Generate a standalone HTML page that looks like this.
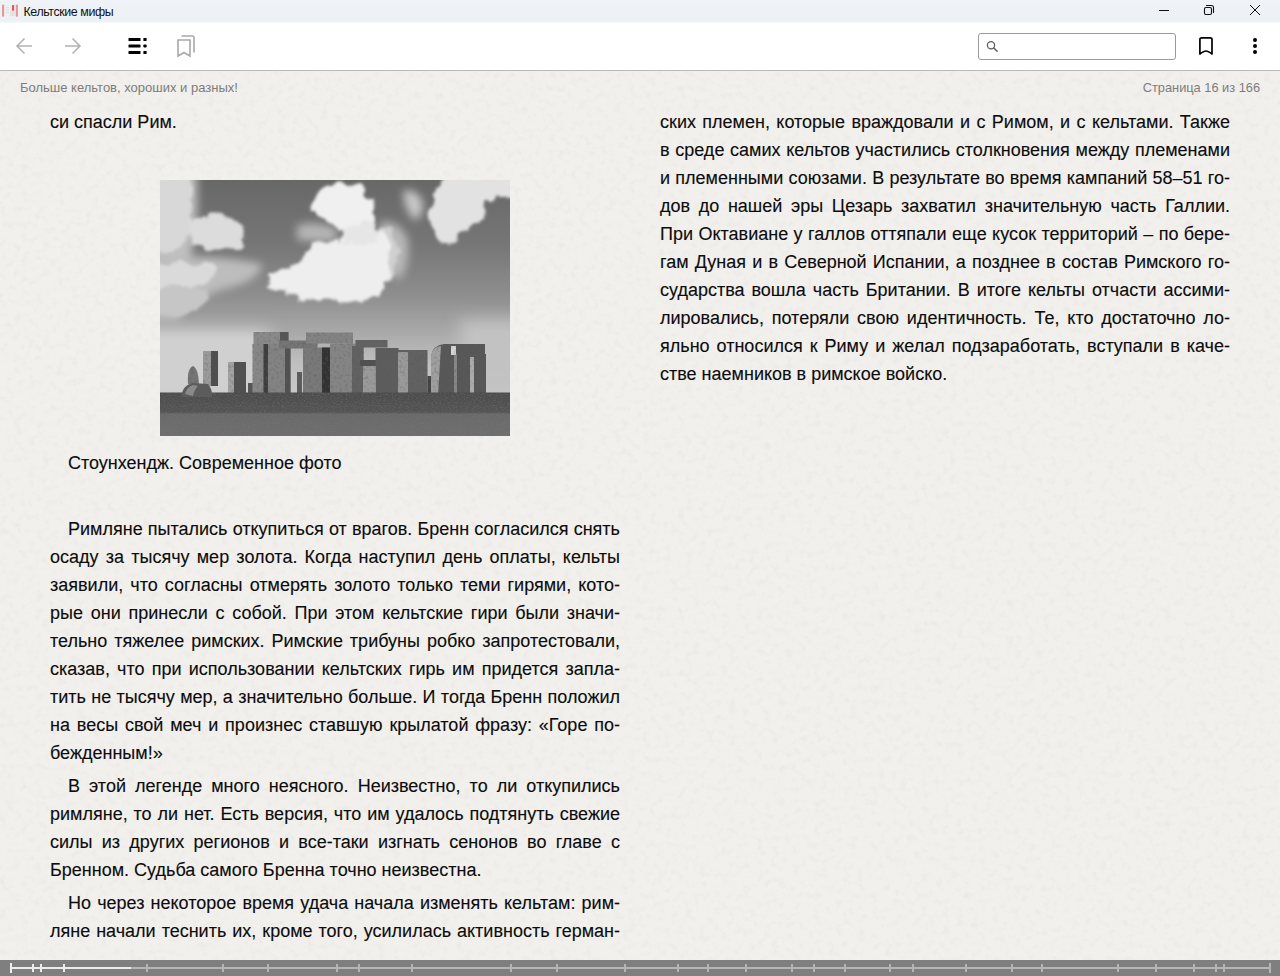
<!DOCTYPE html>
<html><head><meta charset="utf-8">
<style>
*{margin:0;padding:0;box-sizing:border-box}
html,body{width:1280px;height:976px;overflow:hidden;font-family:"Liberation Sans",sans-serif;background:#f2f0ed}
#title{position:absolute;left:0;top:0;width:1280px;height:23px;background:linear-gradient(#eff3f8,#ecf1f5 90%,#f6f9fa)}
#title .t{position:absolute;left:23.5px;top:3.5px;font-size:12.4px;letter-spacing:-0.4px;line-height:16px;color:#111}
#tool{position:absolute;left:0;top:23px;width:1280px;height:47px;background:#fff}
#tline{position:absolute;left:0;top:70px;width:1280px;height:1px;background:#b9b9b9}
#page{position:absolute;left:0;top:71px;width:1280px;height:889px;background:#f2f0ed;overflow:hidden}
.hdr{position:absolute;top:9px;font-size:13px;line-height:16px;color:#7c7c7c}
.col{position:absolute;width:570px;font-size:18px;line-height:28px;color:#0c0c0c;-webkit-text-stroke:0.12px #0c0c0c}
.l{display:block;height:28px;white-space:nowrap;text-align:justify;text-align-last:justify}
.e{text-align:left;text-align-last:left}
.i{text-indent:18px}
#bar{position:absolute;left:0;top:960px;width:1280px;height:16px;background:#7f7f7f}
</style></head><body>
<div id="title">
 <svg style="position:absolute;left:0;top:0" width="20" height="20" viewBox="0 0 20 20">
  <rect x="4" y="5" width="11.8" height="11.5" fill="#efefef"/>
  <rect x="6" y="7" width="3" height="0.8" fill="#dcdcdc"/><rect x="6" y="9.5" width="3" height="0.8" fill="#dcdcdc"/><rect x="6" y="12" width="3" height="0.8" fill="#dcdcdc"/>
  <rect x="10" y="11" width="5" height="5" fill="#e2e2e2"/>
  <rect x="2" y="4.5" width="2.1" height="12.3" rx="0.8" fill="#e69a94"/>
  <rect x="15.8" y="4.5" width="2.2" height="12.3" rx="0.8" fill="#e69a94"/>
  <rect x="12" y="4.9" width="2.1" height="5.8" rx="0.5" fill="#e0564c"/>
 </svg>
 <div class="t">Кельтские мифы</div>
 <svg style="position:absolute;left:1150px;top:0" width="130" height="22" viewBox="1150 0 130 22">
  <line x1="1159" y1="10.5" x2="1169" y2="10.5" stroke="#111" stroke-width="1"/>
  <rect x="1204.5" y="7.5" width="7" height="7" rx="1.5" fill="none" stroke="#111" stroke-width="1.1"/>
  <path d="M1206.5 5.5 H1211.5 Q1213.5 5.5 1213.5 7.5 V12.5" fill="none" stroke="#111" stroke-width="1.1" stroke-linecap="round"/>
  <path d="M1250 5 L1260 15 M1260 5 L1250 15" stroke="#111" stroke-width="1"/>
 </svg>
</div>
<div id="tool">
 <svg style="position:absolute;left:0;top:0" width="1280" height="47" viewBox="0 23 1280 47">
  <path d="M17 46 H32 M24.5 38.5 L17 46 L24.5 53.5" fill="none" stroke="#b3b3b3" stroke-width="1.6"/>
  <path d="M65 46 H80 M72.5 38.5 L80 46 L72.5 53.5" fill="none" stroke="#b3b3b3" stroke-width="1.6"/>
  <rect x="128.5" y="38" width="12" height="3" rx="0.6" fill="#000"/>
  <rect x="128.5" y="44.5" width="12" height="3" rx="0.6" fill="#000"/>
  <rect x="128.5" y="51" width="12" height="3" rx="0.6" fill="#000"/>
  <rect x="143.4" y="38" width="3.2" height="3" rx="0.5" fill="#000"/>
  <rect x="143.4" y="44.5" width="3.2" height="3" rx="0.8" fill="#000"/>
  <rect x="143.4" y="51" width="3.2" height="3" rx="0.5" fill="#000"/>
  <path d="M178 56 V40 H190 V56 L184 52.5 Z" fill="none" stroke="#a9a9a9" stroke-width="1.6"/>
  <path d="M181.5 36 H192.5 Q194 36 194 37.5 V52.5" fill="none" stroke="#a9a9a9" stroke-width="1.6"/>
  <rect x="978.5" y="33.5" width="197" height="26" rx="2.5" fill="#fff" stroke="#9a9a9a" stroke-width="1"/>
  <circle cx="991" cy="45.2" r="3.6" fill="none" stroke="#5c5c5c" stroke-width="1.25"/>
  <path d="M993.6 47.8 L997.6 51.8" stroke="#5c5c5c" stroke-width="1.5"/>
  <path d="M1199.9 54 V39.6 Q1199.9 37.9 1201.6 37.9 H1210.3 Q1212 37.9 1212 39.6 V54 Q1208 51 1205.95 51 Q1204 51 1199.9 54 Z" fill="none" stroke="#000" stroke-width="1.7" stroke-linejoin="round"/>
  <circle cx="1255" cy="40" r="2" fill="#000"/>
  <circle cx="1255" cy="46" r="2" fill="#000"/>
  <circle cx="1255" cy="52" r="2" fill="#000"/>
 </svg>
</div>
<div id="tline"></div>
<div id="page">
 <svg style="position:absolute;left:0;top:0" width="1280" height="889">
  <filter id="paper" x="0" y="0" width="100%" height="100%">
   <feTurbulence type="fractalNoise" baseFrequency="0.14" numOctaves="4" seed="7" result="n"/>
   <feColorMatrix in="n" type="matrix" values="0 0 0 0 0.55  0 0 0 0 0.52  0 0 0 0 0.49  1.6 0 0 0 -0.78"/>
  </filter>
  <rect width="1280" height="889" filter="url(#paper)" opacity="0.22"/>
 </svg>
  <div class="hdr" style="left:20px">Больше кельтов, хороших и разных!</div>
 <div class="hdr" style="right:20px;font-size:12.8px">Страница 16 из 166</div>
</div>

<div class="col" style="left:50px;top:108px"><span class="l e">си спасли Рим.</span></div>
<svg id="photo" style="position:absolute;left:160px;top:180px;overflow:hidden" width="350" height="256" viewBox="0 0 350 256">
 <defs>
  <linearGradient id="sky" x1="0" y1="0" x2="0" y2="1">
   <stop offset="0" stop-color="#686868"/>
   <stop offset="0.25" stop-color="#767676"/>
   <stop offset="0.45" stop-color="#8e8e8e"/>
   <stop offset="0.6" stop-color="#aaaaaa"/>
   <stop offset="0.72" stop-color="#c0c0c0"/>
   <stop offset="0.83" stop-color="#c8c8c8"/>
  </linearGradient>
  <linearGradient id="gnd" x1="0" y1="0" x2="0" y2="1">
   <stop offset="0" stop-color="#4c4c4c"/>
   <stop offset="0.45" stop-color="#545454"/>
   <stop offset="0.5" stop-color="#6b6b6b"/>
   <stop offset="1" stop-color="#6e6e6e"/>
  </linearGradient>
  <filter id="b2" x="-30%" y="-30%" width="160%" height="160%">
   <feTurbulence type="fractalNoise" baseFrequency="0.07" numOctaves="3" seed="11" result="t"/>
   <feDisplacementMap in="SourceGraphic" in2="t" scale="14" xChannelSelector="R" yChannelSelector="G" result="d"/>
   <feGaussianBlur in="d" stdDeviation="1.6"/>
  </filter>
  <filter id="b4" x="-50%" y="-50%" width="200%" height="200%"><feGaussianBlur stdDeviation="4"/></filter>
  <filter id="b8" x="-50%" y="-50%" width="200%" height="200%"><feGaussianBlur stdDeviation="8"/></filter>
  <filter id="b1" x="-20%" y="-20%" width="140%" height="140%"><feGaussianBlur stdDeviation="0.6"/></filter>
  <filter id="stx" x="-5%" y="-5%" width="110%" height="110%">
   <feGaussianBlur in="SourceGraphic" stdDeviation="0.6" result="s"/>
   <feTurbulence type="fractalNoise" baseFrequency="0.35" numOctaves="2" seed="3" result="t"/>
   <feColorMatrix in="t" type="matrix" values="0 0 0 0 0.1  0 0 0 0 0.1  0 0 0 0 0.1  0 0 0 -1.2 0.62" result="ta"/>
   <feComposite in="ta" in2="s" operator="in" result="n"/>
   <feMerge><feMergeNode in="s"/><feMergeNode in="n"/></feMerge>
  </filter>
  <filter id="gtx" x="0" y="0" width="100%" height="100%">
   <feTurbulence type="fractalNoise" baseFrequency="0.5 0.9" numOctaves="2" seed="5" result="t"/>
   <feColorMatrix in="t" type="matrix" values="0 0 0 0 0.2  0 0 0 0 0.2  0 0 0 0 0.2  0 0 0 -0.9 0.5" result="ta"/>
   <feComposite in="ta" in2="SourceGraphic" operator="in" result="n"/>
   <feMerge><feMergeNode in="SourceGraphic"/><feMergeNode in="n"/></feMerge>
  </filter>
 </defs>
 <rect width="350" height="256" fill="url(#sky)"/>
 <g filter="url(#b8)">
  <rect x="-20" y="150" width="130" height="62" fill="#d2d2d2"/>
  <rect x="300" y="140" width="70" height="72" fill="#c2c2c2"/>
 </g>
 <!-- soft cloud bodies -->
 <g filter="url(#b4)">
  <path d="M-20 -20 H36 Q40 40 32 70 Q25 100 20 140 L-20 140 Z" fill="#c0c0c0"/>
  <path d="M-20 80 Q40 72 102 84 Q100 102 60 110 Q30 125 -20 137 Z" fill="#bdbdbd"/>
  <path d="M137 45 Q160 40 178 50 L175 62 Q155 62 137 60 Z" fill="#b5b5b5"/>
  <path d="M220 42 Q240 40 248 60 Q250 90 238 100 Q225 90 220 70 Z" fill="#b8b8b8"/>
  <path d="M243 11 Q255 8 262 20 Q265 35 255 40 Q245 32 243 11 Z" fill="#c8c8c8"/>
  <path d="M-20 160 H110 V212 H-20 Z" fill="#d0d0d0"/>
 </g>
 <g filter="url(#b2)">
  <path d="M-10 -10 H28 Q34 20 30 45 Q28 62 22 70 Q10 72 -10 72 Z" fill="#d8d8d8"/>
  <path d="M28 40 Q45 34 62 36 Q78 38 84 52 Q86 64 76 68 Q55 70 30 66 Z" fill="#dcdcdc"/>
  <path d="M-10 84 Q25 80 55 86 Q58 100 45 106 Q20 110 -10 108 Z" fill="#dadada"/>
  <path d="M-10 108 Q20 106 50 112 Q45 130 20 136 L-10 137 Z" fill="#c6c6c6"/>
  <path d="M150 20.5 L164 8.2 L186 2.7 L205 8.2 L213 21.9 L216 38.3 L210.6 46.5 L191.4 52 L177.7 49.2 L158.6 35.5 L149 27.3 Z" fill="#f0f0f0"/>
  <path d="M153 63 L142 79 L128.5 87.5 L109.4 95.7 L106.6 106.6 L120.3 112 L142 117.6 L164 120.3 L191.4 121.7 L216 117.6 L228 104 L232 90 L230 68 L224 50 L207.8 48 L186 54.7 L169.5 60.2 Z" fill="#eeeeee"/>
  <path d="M228 104 L236 92 L240 70 L232 50 L224 50 L230 68 Z" fill="#cfcfcf"/>
  <path d="M180 50 L212 40 L222 52 L215 64 L185 62 Z" fill="#e6e6e6"/>
  <path d="M270.7 27.3 L273.4 11 L290 -10 L360 -10 L360 16.4 L328 21.9 L320 41 L300.8 52 L290 65.6 L279 62.9 L270.7 43.8 Z" fill="#e2e2e2"/>
 </g>
 <!-- stones -->
 <g filter="url(#stx)">
  <path d="M28 204 Q27 188 33 186 Q38 188 39 204 Z" fill="#747474"/>
  <rect x="43" y="171" width="15" height="35" fill="#9a9a9a"/>
  <rect x="51" y="171" width="7" height="35" fill="#4f4f4f"/>
  <rect x="68" y="182" width="18" height="32" fill="#515151"/>
  <rect x="68" y="182" width="6" height="32" fill="#a2a2a2"/>
  <rect x="88" y="203" width="6" height="11" fill="#575757"/>
  <rect x="92.5" y="164" width="16" height="50" fill="#878787"/>
  <rect x="103.5" y="164" width="5" height="50" fill="#3e3e3e"/>
  <rect x="108" y="163" width="22.5" height="51" fill="#838383"/>
  <rect x="125" y="165" width="5.5" height="49" fill="#515151"/>
  <rect x="93.5" y="152" width="35" height="12" fill="#8a8a8a"/>
  <rect x="120" y="152" width="8.5" height="12" fill="#565656"/>
  <rect x="119" y="160.5" width="38.5" height="8" fill="#747474"/>
  <rect x="137" y="192" width="5" height="22" fill="#5d5d5d"/>
  <rect x="143" y="167.5" width="27" height="47" fill="#797979"/>
  <rect x="162" y="167.5" width="8" height="47" fill="#323232"/>
  <rect x="170" y="163.5" width="33.5" height="51.5" fill="#858585"/>
  <rect x="192" y="166" width="11.5" height="49" fill="#626262"/>
  <rect x="146" y="152.5" width="47" height="11" fill="#838383"/>
  <rect x="195.5" y="160" width="32" height="7.5" fill="#646464"/>
  <rect x="200" y="180" width="16" height="6" fill="#515151"/>
  <rect x="203" y="186" width="12" height="29" fill="#9a9a9a"/>
  <rect x="215.5" y="168" width="23" height="47" fill="#5d5d5d"/>
  <rect x="238" y="170" width="29.5" height="45" fill="#626262"/>
  <rect x="238" y="172" width="10" height="43" fill="#9a9a9a"/>
  <rect x="267.5" y="196" width="4.5" height="19" fill="#424242"/>
  <path d="M271 215 V176 Q273 165 284 164 H325 V174 H326 V215 Z" fill="#585858"/>
  <path d="M271 215 V176 Q273 166 281 166 L278 215 Z" fill="#9f9f9f"/>
  <rect x="294" y="174" width="3" height="41" fill="#878787"/>
  <rect x="310" y="177" width="4" height="38" fill="#ababab"/>
  <rect x="291" y="166" width="5" height="9" fill="#d5d5d5"/>
 </g>
 <!-- ground -->
 <rect x="0" y="212.5" width="350" height="43.5" fill="url(#gnd)" filter="url(#gtx)"/>
 <path d="M21 217 Q23 205 32 203 L48 204 Q53 210 52 217 Z" fill="#5c5c5c" filter="url(#b1)"/>
 <path d="M25 214 Q27 207 33 205 L38 206 Q34 210 33 216 Z" fill="#8a8a8a" filter="url(#b1)"/>
</svg>
<div class="col" style="left:50px;top:449px"><span class="l e i">Стоунхендж. Современное фото</span></div>
<div class="col" id="p1" style="left:50px;top:515px">
<span class="l i">Римляне пытались откупиться от врагов. Бренн согласился снять</span>
<span class="l">осаду за тысячу мер золота. Когда наступил день оплаты, кельты</span>
<span class="l">заявили, что согласны отмерять золото только теми гирями, кото-</span>
<span class="l">рые они принесли с собой. При этом кельтские гири были значи-</span>
<span class="l">тельно тяжелее римских. Римские трибуны робко запротестовали,</span>
<span class="l">сказав, что при использовании кельтских гирь им придется запла-</span>
<span class="l">тить не тысячу мер, а значительно больше. И тогда Бренн положил</span>
<span class="l">на весы свой меч и произнес ставшую крылатой фразу: «Горе по-</span>
<span class="l e">бежденным!»</span>
</div>
<div class="col" id="p2" style="left:50px;top:772px">
<span class="l i">В этой легенде много неясного. Неизвестно, то ли откупились</span>
<span class="l">римляне, то ли нет. Есть версия, что им удалось подтянуть свежие</span>
<span class="l">силы из других регионов и все-таки изгнать сенонов во главе с</span>
<span class="l e">Бренном. Судьба самого Бренна точно неизвестна.</span>
</div>
<div class="col" id="p3" style="left:50px;top:889px">
<span class="l i">Но через некоторое время удача начала изменять кельтам: рим-</span>
<span class="l">ляне начали теснить их, кроме того, усилилась активность герман-</span>
</div>
<div class="col" id="r1" style="left:660px;top:108px">
<span class="l">ских племен, которые враждовали и с Римом, и с кельтами. Также</span>
<span class="l">в среде самих кельтов участились столкновения между племенами</span>
<span class="l">и племенными союзами. В результате во время кампаний 58–51 го-</span>
<span class="l">дов до нашей эры Цезарь захватил значительную часть Галлии.</span>
<span class="l">При Октавиане у галлов оттяпали еще кусок территорий – по бере-</span>
<span class="l">гам Дуная и в Северной Испании, а позднее в состав Римского го-</span>
<span class="l">сударства вошла часть Британии. В итоге кельты отчасти ассими-</span>
<span class="l">лировались, потеряли свою идентичность. Те, кто достаточно ло-</span>
<span class="l">яльно относился к Риму и желал подзаработать, вступали в каче-</span>
<span class="l e">стве наемников в римское войско.</span>
</div>
<div id="bar"><svg style="position:absolute;left:0;top:0" width="1280" height="16" viewBox="0 960 1280 16"><rect x="10" y="967" width="1261" height="2" fill="#b5b5b5"/><rect x="10" y="967" width="121" height="2" fill="#ececec"/><rect x="10" y="963" width="2" height="10" fill="#ececec"/><rect x="1269" y="963" width="2" height="10" fill="#b5b5b5"/><rect x="32" y="964" width="2" height="8" fill="#ececec"/><rect x="40" y="964" width="2" height="8" fill="#ececec"/><rect x="63" y="964" width="2" height="8" fill="#ececec"/><rect x="146" y="964" width="2" height="8" fill="#b5b5b5"/><rect x="222" y="964" width="2" height="8" fill="#b5b5b5"/><rect x="267" y="964" width="2" height="8" fill="#b5b5b5"/><rect x="336" y="964" width="2" height="8" fill="#b5b5b5"/><rect x="358" y="964" width="2" height="8" fill="#b5b5b5"/><rect x="411" y="964" width="2" height="8" fill="#b5b5b5"/><rect x="510" y="964" width="2" height="8" fill="#b5b5b5"/><rect x="556" y="964" width="2" height="8" fill="#b5b5b5"/><rect x="624" y="964" width="2" height="8" fill="#b5b5b5"/><rect x="677" y="964" width="2" height="8" fill="#b5b5b5"/><rect x="707" y="964" width="2" height="8" fill="#b5b5b5"/><rect x="745" y="964" width="2" height="8" fill="#b5b5b5"/><rect x="791" y="964" width="2" height="8" fill="#b5b5b5"/><rect x="813" y="964" width="2" height="8" fill="#b5b5b5"/><rect x="844" y="964" width="2" height="8" fill="#b5b5b5"/><rect x="889" y="964" width="2" height="8" fill="#b5b5b5"/><rect x="912" y="964" width="2" height="8" fill="#b5b5b5"/><rect x="965" y="964" width="2" height="8" fill="#b5b5b5"/><rect x="1011" y="964" width="2" height="8" fill="#b5b5b5"/><rect x="1041" y="964" width="2" height="8" fill="#b5b5b5"/><rect x="1117" y="964" width="2" height="8" fill="#b5b5b5"/><rect x="1155" y="964" width="2" height="8" fill="#b5b5b5"/><rect x="1193" y="964" width="2" height="8" fill="#b5b5b5"/><rect x="1215" y="964" width="2" height="8" fill="#b5b5b5"/><rect x="1223" y="964" width="2" height="8" fill="#b5b5b5"/></svg></div>
</body></html>
